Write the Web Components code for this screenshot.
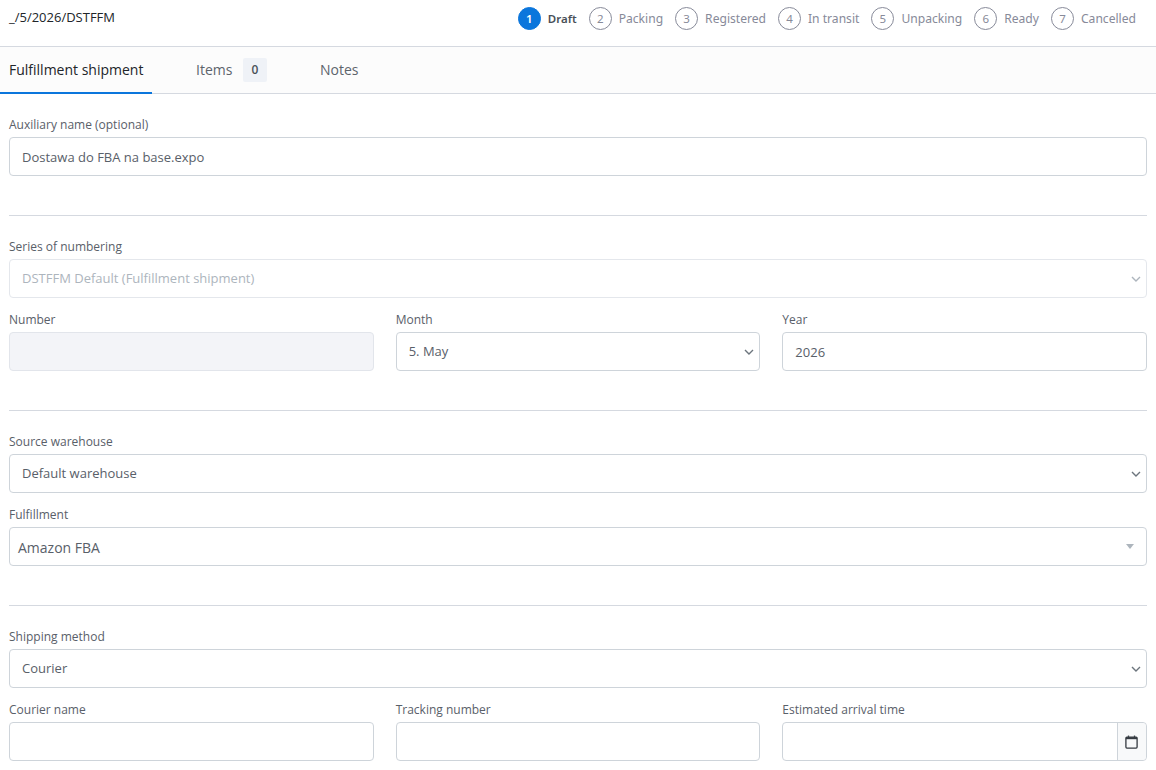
<!DOCTYPE html>
<html>
<head>
<meta charset="utf-8">
<title>Fulfillment shipment</title>
<style>
  html, body { margin: 0; padding: 0; background: #fff; }
  body { font-family: "Open Sans", "Noto Sans", sans-serif; width: 1156px; height: 770px; overflow: hidden; }
</style>
</head>
<body>
<x-shipment></x-shipment>

<script>
const CHEVRON = `<svg width="10" height="6" viewBox="0 0 10 6"><path d="M1 1l4 4 4-4" fill="none" stroke="currentColor" stroke-width="1.4"/></svg>`;
const CALENDAR = `<svg width="13" height="14" viewBox="0 0 13 14"><path d="M3.5 .5v2.5M9.5 .5v2.5" stroke="#495057" stroke-width="1.3" fill="none"/><rect x=".9" y="2.2" width="11.2" height="10.9" rx="1" fill="none" stroke="#343a40" stroke-width="1.3"/><rect x=".9" y="2.2" width="11.2" height="2" fill="#343a40"/></svg>`;

class XStep extends HTMLElement {
  constructor() {
    super();
    const root = this.attachShadow({ mode: "open" });
    root.innerHTML = `
      <style>
        :host { display: flex; align-items: center; gap: 7px; font-family: "Noto Sans", sans-serif; font-size: 12.1px; line-height: 16px; color: #878a99; }
        .num {
          width: 23px; height: 23px; box-sizing: border-box; border-radius: 50%;
          border: 1px solid #878a99; display: flex; align-items: center; justify-content: center;
          font-size: 11.5px;
        }
        :host([active]) { color: #495057; font-weight: 600; font-size: 11.5px; }
        :host([active]) .num { background: #0b76dc; border-color: #0b76dc; color: #fff; }
      </style>
      <span class="num">${this.getAttribute("n")}</span><span><slot></slot></span>`;
  }
}
customElements.define("x-step", XStep);

class XTopbar extends HTMLElement {
  constructor() {
    super();
    this.attachShadow({ mode: "open" }).innerHTML = `
      <style>
        :host {
          display: flex; justify-content: space-between; height: 46px; box-sizing: content-box;
          border-bottom: 1px solid #d5d9e0; padding: 0 20px 0 9px;
        }
        .title { font-size: 13px; line-height: 18px; color: #212529; padding-top: 8px; }
        .steps { display: flex; gap: 12px; padding-top: 7px; height: 23px; }
      </style>
      <div class="title">_/5/2026/DSTFFM</div>
      <div class="steps"><slot></slot></div>`;
  }
}
customElements.define("x-topbar", XTopbar);

class XTabs extends HTMLElement {
  constructor() {
    super();
    this.attachShadow({ mode: "open" }).innerHTML = `
      <style>
        :host {
          display: flex; height: 46px; background: #fcfcfc;
          border-bottom: 1px solid #d5d9e0; font-size: 14px; color: #5c646c; white-space: nowrap;
        }
        .tab { display: flex; align-items: center; height: 45px; box-sizing: border-box; padding: 0 9px; position: relative; }
        .tab.on { color: #212529; width: 152px; height: 46px; padding-bottom: 1px; }
        .tab.on::after { content: ""; position: absolute; left: 0; right: 0; bottom: -1px; height: 2px; background: #0b76dc; }
        .items { margin-left: 44px; width: 71px; padding: 0; }
        .notes { margin-left: 53px; padding: 0; }
        .badge {
          margin-left: auto; width: 24px; height: 24px; flex: none; border-radius: 2px; background: #eff2f7;
          display: flex; align-items: center; justify-content: center; font-size: 12px; font-weight: 600; color: #495057;
        }
      </style>
      <div class="tab on">Fulfillment shipment</div>
      <div class="tab items">Items<span class="badge">0</span></div>
      <div class="tab notes">Notes</div>`;
  }
}
customElements.define("x-tabs", XTabs);

class XField extends HTMLElement {
  constructor() {
    super();
    const arrow = this.getAttribute("arrow");
    const label = this.getAttribute("label");
    let tail = "";
    if (arrow === "chevron") tail = `<span class="arrow">${CHEVRON}</span>`;
    if (arrow === "caret") tail = `<span class="caret"></span>`;
    if (arrow === "date") tail = `<span class="addon">${CALENDAR}</span>`;
    this.attachShadow({ mode: "open" }).innerHTML = `
      <style>
        :host { display: block; min-width: 0; }
        label { display: block; font-size: 12px; line-height: 18px; padding-top: 1px; margin-bottom: 3px; color: #596069; }
        .box {
          height: 39px; box-sizing: border-box; border: 1px solid #ced4da; border-radius: 4px;
          background: #fff; display: flex; align-items: center; padding-left: 12px;
          font-size: 13px; color: #596069; position: relative;
        }
        .value { flex: 1; line-height: 18px; }
        :host([arrow="chevron"]) .value { padding-bottom: 2px; }
        .arrow { color: #6c757d; display: flex; margin-right: 5px; }
        .caret {
          width: 0; height: 0; margin-right: 12px;
          border: 4px solid transparent; border-top: 5px solid #adb5bd; border-bottom: 0;
        }
        .addon {
          align-self: stretch; width: 29px; box-sizing: border-box; background: #f8f9fa; border-left: 1px solid #ced4da;
          border-radius: 0 4px 4px 0; display: flex; align-items: center; justify-content: center;
        }
        :host([disabled]) .box { border-color: #e4e7ec; color: #adb5bd; }
        :host([disabled]) .arrow { color: #adb5bd; }
        :host([filled]) .box { background: #f3f4f8; border-color: #e2e5eb; }
        :host([flush]) .box { padding-left: 8px; font-size: 14px; }
        :host([flush]) .value { padding-top: 2px; }
      </style>
      <label>${label}</label>
      <div class="box"><span class="value"><slot></slot></span>${tail}</div>`;
  }
}
customElements.define("x-field", XField);

class XRow extends HTMLElement {
  constructor() {
    super();
    this.attachShadow({ mode: "open" }).innerHTML = `
      <style>
        :host { display: grid; grid-template-columns: repeat(3, 1fr); column-gap: 22px; }
      </style>
      <slot></slot>`;
  }
}
customElements.define("x-row", XRow);

class XSection extends HTMLElement {
  constructor() {
    super();
    this.attachShadow({ mode: "open" }).innerHTML = `
      <style>
        :host { display: flex; flex-direction: column; gap: 12px; padding: 21px 0 39px; border-bottom: 1px solid #d5d9e0; }
        :host(:last-child) { border-bottom: 0; padding-bottom: 0; }
      </style>
      <slot></slot>`;
  }
}
customElements.define("x-section", XSection);

class XShipment extends HTMLElement {
  constructor() {
    super();
    this.attachShadow({ mode: "open" }).innerHTML = `
      <style>
        :host { display: block; color: #495057; }
        main { padding: 0 9px; }
      </style>
      <x-topbar>
        <x-step n="1" active>Draft</x-step>
        <x-step n="2">Packing</x-step>
        <x-step n="3">Registered</x-step>
        <x-step n="4">In transit</x-step>
        <x-step n="5">Unpacking</x-step>
        <x-step n="6">Ready</x-step>
        <x-step n="7">Cancelled</x-step>
      </x-topbar>
      <x-tabs></x-tabs>
      <main>
        <x-section>
          <x-field label="Auxiliary name (optional)">Dostawa do FBA na base.expo</x-field>
        </x-section>
        <x-section>
          <x-field label="Series of numbering" arrow="chevron" disabled>DSTFFM Default (Fulfillment shipment)</x-field>
          <x-row>
            <x-field label="Number" filled></x-field>
            <x-field label="Month" arrow="chevron">5. May</x-field>
            <x-field label="Year">2026</x-field>
          </x-row>
        </x-section>
        <x-section>
          <x-field label="Source warehouse" arrow="chevron">Default warehouse</x-field>
          <x-field label="Fulfillment" arrow="caret" flush>Amazon FBA</x-field>
        </x-section>
        <x-section>
          <x-field label="Shipping method" arrow="chevron">Courier</x-field>
          <x-row>
            <x-field label="Courier name"></x-field>
            <x-field label="Tracking number"></x-field>
            <x-field label="Estimated arrival time" arrow="date"></x-field>
          </x-row>
        </x-section>
      </main>`;
  }
}
customElements.define("x-shipment", XShipment);
</script>
</body>
</html>
